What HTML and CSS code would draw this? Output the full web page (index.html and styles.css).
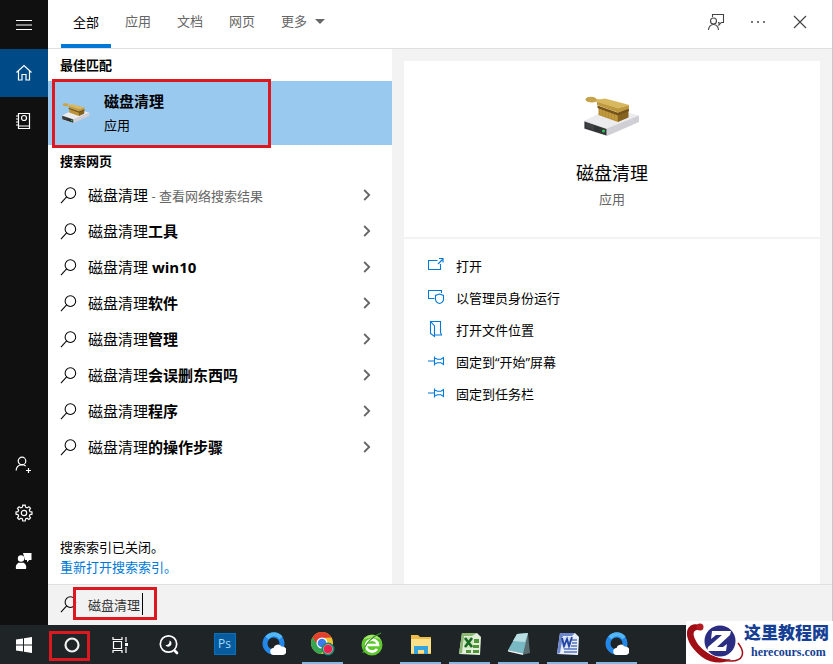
FILE: index.html
```html
<!DOCTYPE html>
<html lang="zh-CN">
<head>
  <meta charset="UTF-8" />
  <meta name="viewport" content="width=device-width, initial-scale=1.0"/>
  <title>搜索</title>
  <link rel="stylesheet" href="styles.css">
</head>
<body>

  <!-- Shared icons -->
  <svg class="sprite" aria-hidden="true">
    <symbol id="search" viewBox="0 0 18 18">
      <g fill="none" stroke="currentColor" stroke-width="1.1"><circle cx="11" cy="6.5" r="5.6"/><path d="M7 10.4 1 17"/></g>
    </symbol>
    <symbol id="chevron" viewBox="0 0 8 12">
      <path d="M1.2 1 6.2 6l-5 5" fill="none" stroke="#666" stroke-width="1.8"/>
    </symbol>
    <symbol id="pin" viewBox="0 0 18 18">
      <path d="M0 8h6.500M6.500 3.500v9M6.500 5l3 1.200H13l2.500-1.700v7L13 9.800H9.500l-3 1.200" fill="none" stroke="currentColor" stroke-width="1.1"/>
    </symbol>
    <symbol id="drive" viewBox="0 0 56 42">
      <path d="M0 26 14 19l24-3 17 4.500L23 34z" fill="#ececef"/>
      <path d="M23 33.500 55 20.500V27L23 41z" fill="#cfcfd5"/>
      <path d="M0 25.500l23 8V41L0 34z" fill="#dcdce0"/>
      <path d="M.5 26.500l22 7.500v6.500l-22-7z" fill="#303234"/>
      <path d="M3 28v5M5 28.500v5M7 29v5M9 30v5" stroke="#4d5052" stroke-width="1"/>
      <circle cx="19.500" cy="36" r="1.500" fill="#2ecb58"/>
      <path d="M14.500 11 34 17.500V27l-19.500-7z" fill="#b58d32"/>
      <path d="M34 17.500 44.500 13v9.500L34 27z" fill="#86621f"/>
      <path d="M17 13v7M20 14v7M23 15v7M26 16v7M29 17v7M32 18v7" stroke="#caa54a" stroke-width="1"/>
      <path d="M13.500 10.500 34 18l11-4v2l-11 4.500L13.500 13z" fill="#73521b"/>
      <path d="M13 5v5l21 7.500 11-4v-3.500L34 13z" fill="#bd983f"/>
      <path d="M10 3c3 1.500 6 1.500 11 .5L45.500 10 34 13.500 13 7C9 8 3 7.500 2 5c-.5-2.500 4-4 8-2z" fill="#d8b85f"/>
      <ellipse cx="7" cy="4.500" rx="5.500" ry="2.800" fill="#c5a34c"/>
    </symbol>
    <symbol id="cloud-q" viewBox="0 0 24 24">
      <circle cx="11.500" cy="11.500" r="8.500" fill="none" stroke="#2387e8" stroke-width="5"/>
      <path d="M5 6a8.500 8.500 0 0 1 14 0" fill="none" stroke="#53b7f7" stroke-width="4"/>
      <path d="M12 23a3.500 3.500 0 0 1-.5-7 4.500 4.500 0 0 1 8-1.500 4 4 0 0 1 1.500 8.500z" fill="#fff"/>
    </symbol>
  </svg>

  <div class="search-window">

    <!-- Left rail -->
    <nav class="rail" aria-label="导航">
      <button aria-label="菜单">
        <svg width="18" height="18"><path d="M1 4.500h16M1 9h16M1 13.500h16" stroke="currentColor" stroke-width="1.200"/></svg>
      </button>
      <button class="current" aria-label="主页">
        <svg width="18" height="18" fill="none" stroke="currentColor" stroke-width="1.200"><path d="M1.500 8.500 9 1.500l7.500 7M3.500 7v9H7v-5.500h4V16h3.500V7"/></svg>
      </button>
      <button aria-label="笔记本">
        <svg width="18" height="18" fill="none" stroke="currentColor" stroke-width="1.200"><path d="M3.500 1.500h11v15h-11zM1 4h3M1 7h3M1 10h3M1 13h3M3.500 14h11"/><circle cx="9" cy="6" r="2.500"/></svg>
      </button>
      <span class="spacer"></span>
      <button aria-label="登录">
        <svg width="18" height="18" fill="none" stroke="currentColor" stroke-width="1.200"><circle cx="7" cy="5" r="3.800"/><path d="M1.200 14.500a5.800 5.800 0 0 1 9.500-4.500M13.500 12v5M11 14.500h5"/></svg>
      </button>
      <button aria-label="设置">
        <svg width="18" height="18" viewBox="0 0 18 18" fill="none" stroke="currentColor" stroke-width="1.200"><circle cx="9" cy="9" r="2.700"/><path d="M7.800 1.200h2.400l.4 2 1.500.7 1.800-1.200 1.600 1.600-1.200 1.800.7 1.500 2 .4v2.200l-2 .4-.7 1.500 1.200 1.800-1.600 1.600-1.800-1.200-1.500.7-.4 2H7.800l-.4-2-1.500-.7-1.800 1.200-1.600-1.600 1.200-1.800-.7-1.500-2-.4V8l2-.4.7-1.500-1.200-1.800 1.600-1.600 1.800 1.200 1.500-.7z"/></svg>
      </button>
      <button aria-label="反馈">
        <svg width="18" height="18" fill="currentColor"><path d="M8 1h8.500v7h-2.200L12 10.300V8H10z"/><circle cx="6" cy="6.500" r="3.200"/><path d="M1 17a5 5.500 0 0 1 2.500-6.200h5.200A5 5.500 0 0 1 11 17z"/></svg>
      </button>
    </nav>

    <div class="panel">
      <header class="topbar">
        <div class="tabs">
          <button class="tab selected">全部</button>
          <button class="tab">应用</button>
          <button class="tab">文档</button>
          <button class="tab">网页</button>
          <button class="tab">更多 <svg width="10" height="5"><path d="M0 0h10L5 5z" fill="#666"/></svg></button>
        </div>
        <div class="window-tools">
          <button aria-label="反馈">
            <svg width="18" height="18" fill="none" stroke="currentColor" stroke-width="1.100"><path d="M5.500 4V1.500h11v8h-2.200L12 12V9.500h-1"/><circle cx="6.500" cy="8" r="3"/><path d="M1.500 17a5 5.500 0 0 1 10 0"/></svg>
          </button>
          <button aria-label="选项">
            <svg width="18" height="18" fill="#777"><path d="M2 8h2v2H2zM8 8h2v2H8zM14 8h2v2h-2z"/></svg>
          </button>
          <button aria-label="关闭">
            <svg width="18" height="18"><path d="m3 3 12 12M15 3 3 15" stroke="currentColor" stroke-width="1.200"/></svg>
          </button>
        </div>
      </header>

      <div class="content">
        <section class="results">
          <h2>最佳匹配</h2>
          <a href="#" class="best marked">
            <svg class="best-icon"><use href="#drive"/></svg>
            <span><strong>磁盘清理</strong><small>应用</small></span>
          </a>
          <h2>搜索网页</h2>
          <ul>
            <li><a href="#"><svg class="glass"><use href="#search"/></svg><span>磁盘清理<small> - 查看网络搜索结果</small></span><svg class="chevron"><use href="#chevron"/></svg></a></li>
            <li><a href="#"><svg class="glass"><use href="#search"/></svg><span>磁盘清理<b>工具</b></span><svg class="chevron"><use href="#chevron"/></svg></a></li>
            <li><a href="#"><svg class="glass"><use href="#search"/></svg><span>磁盘清理 <b>win10</b></span><svg class="chevron"><use href="#chevron"/></svg></a></li>
            <li><a href="#"><svg class="glass"><use href="#search"/></svg><span>磁盘清理<b>软件</b></span><svg class="chevron"><use href="#chevron"/></svg></a></li>
            <li><a href="#"><svg class="glass"><use href="#search"/></svg><span>磁盘清理<b>管理</b></span><svg class="chevron"><use href="#chevron"/></svg></a></li>
            <li><a href="#"><svg class="glass"><use href="#search"/></svg><span>磁盘清理<b>会误删东西吗</b></span><svg class="chevron"><use href="#chevron"/></svg></a></li>
            <li><a href="#"><svg class="glass"><use href="#search"/></svg><span>磁盘清理<b>程序</b></span><svg class="chevron"><use href="#chevron"/></svg></a></li>
            <li><a href="#"><svg class="glass"><use href="#search"/></svg><span>磁盘清理<b>的操作步骤</b></span><svg class="chevron"><use href="#chevron"/></svg></a></li>
          </ul>
          <div class="index-note">
            <p>搜索索引已关闭。</p>
            <a href="#">重新打开搜索索引。</a>
          </div>
        </section>

        <section class="preview">
          <div class="summary">
            <svg class="app-icon"><use href="#drive"/></svg>
            <h1>磁盘清理</h1>
            <p>应用</p>
          </div>
          <div class="actions">
            <button><svg fill="none" stroke="currentColor" stroke-width="1.100"><path d="M9.500 3.500h-9v9h12V7M10 7l4.500-4.500M11 1.500h4v4"/></svg>打开</button>
            <button><svg fill="none" stroke="currentColor" stroke-width="1.100"><path d="M6.500 9.500h-6v-8h13V4M11.500 5l4 1.500v3.500c0 2.500-2 4-4 4.500-2-.5-4-2-4-4.500V6.500z"/></svg>以管理员身份运行</button>
            <button><svg fill="none" stroke="currentColor" stroke-width="1.100"><path d="M2.500.5h10v11l1 2.500H7M2.500.5v12l4 3V5z"/></svg>打开文件位置</button>
            <button><svg><use href="#pin"/></svg>固定到“开始”屏幕</button>
            <button><svg><use href="#pin"/></svg>固定到任务栏</button>
          </div>
        </section>
      </div>

      <form class="search-bar">
        <label for="query" aria-label="搜索"><svg class="glass"><use href="#search"/></svg></label>
        <div class="field marked"><input type="text" id="query" value="磁盘清理"><span class="caret"></span></div>
      </form>
    </div>
  </div>

  <!-- Taskbar -->
  <footer class="taskbar">
    <div class="system">
      <button aria-label="开始">
        <svg width="18" height="18" fill="#fff"><path d="M1 3.500 8 2.500v6H1zM9 2.300 17 1v7.500H9zM1 9.500h7v6l-7-1zM9 9.500h8V17l-8-1.300z"/></svg>
      </button>
      <button class="marked" aria-label="小娜">
        <svg width="18" height="18"><circle cx="9" cy="9" r="6.500" fill="none" stroke="#f0f0f0" stroke-width="2.200"/></svg>
      </button>
      <button aria-label="任务视图">
        <svg width="18" height="18" fill="none" stroke="#fff" stroke-width="1.200"><path d="M2 1v2.500h9V1M2 17v-2.500h9V17M2.500 5.500h8v7h-8zM15 1v5M15 11v6"/><path d="M14 7h3v3h-3z" fill="#fff" stroke="none"/></svg>
      </button>
      <button aria-label="查找">
        <svg width="22" height="22" fill="none" stroke="#fff"><circle cx="10.500" cy="10" r="8.200" stroke-width="1.700"/><path d="M11.500 6.500a3.200 3.200 0 1 1-4 4.500c2.500.5 4.500-1.500 4-4.500z" fill="#fff" stroke="none"/><path d="m17 17 2 2" stroke-width="2.600" stroke-linecap="round"/></svg>
      </button>
    </div>
    <div class="apps">
      <button aria-label="Photoshop"><span class="ps">Ps</span></button>
      <button aria-label="浏览器"><svg><use href="#cloud-q"/></svg></button>
      <button class="open" aria-label="Chrome">
        <svg viewBox="0 0 24 24"><circle cx="11" cy="11" r="11" fill="#f4c331"/><path d="M1.500 5.500A11 11 0 0 1 20.500 5.500L11 6l-4.500 8z" fill="#e2402f"/><path d="M1.500 5.500A11 11 0 0 0 10 22l5-8.500H7z" fill="#35a552"/><circle cx="11" cy="11" r="5.500" fill="#fff"/><circle cx="11" cy="11" r="4.300" fill="#3b7ded"/><circle cx="17" cy="17" r="6.500" fill="#138a6f"/><circle cx="17" cy="17" r="4.600" fill="#e9254f" stroke="#f6b3bd" stroke-width=".6"/></svg>
      </button>
      <button aria-label="绿色浏览器">
        <svg viewBox="0 0 24 24"><circle cx="12" cy="13" r="10.500" fill="#5fc82e"/><path d="M3 8a10.500 10.500 0 0 1 18 0C15 5 9 5 3 8z" fill="#a4e86c"/><path d="M17 17a6 6 0 1 1 1-4H7" fill="none" stroke="#fff" stroke-width="2.600"/><path d="M3 21C5 11 13 4 21 1" fill="none" stroke="#3f9b25" stroke-width="1.300"/></svg>
      </button>
      <button class="open" aria-label="文件资源管理器">
        <svg viewBox="0 0 24 24"><path d="M2 3h7l2 2h11v17H2z" fill="#eebd47"/><path d="M2 7h20v14H2z" fill="#ffe08a"/><path d="M5 22v-8h14v8h-4v-4H9v4z" fill="#37a3dc"/></svg>
      </button>
      <button class="open" aria-label="Excel">
        <svg viewBox="0 0 24 24"><path d="M4 1h15l4 4-1 18-21-1z" fill="#e3efda"/><path d="M4 1h15l-5 3H6L4 21l-3 1z" fill="#8bb873"/><path d="M16 7h5v4h-5zM15 13h6v3h-6zM15 18h6v3h-6zM8 18h5v3H8z" fill="#4f9638"/><path d="M6 5h9v11H6z" fill="#cfe5bf"/><path d="m7 6 7 9M14 6l-7 9" stroke="#176922" stroke-width="2.600"/></svg>
      </button>
      <button class="open" aria-label="记事本">
        <svg viewBox="0 0 24 24"><path d="m10 3 11-1 2 19-8 2z" fill="#596d70"/><path d="M10 2 21 1l-5 21-15-4z" fill="#79b9c3"/><path d="M10 2 21 1l-3 9-12-1z" fill="#b9dfe2"/><path d="m1 18 15 3.500v1.500L1 19.500z" fill="#f0f3ef"/></svg>
      </button>
      <button class="open" aria-label="Word">
        <svg viewBox="0 0 24 24"><path d="M4 1h15l4 4-1 18-21-1z" fill="#e9effa"/><path d="M4 1h15l-3 3H7L4 21l-3 1z" fill="#6d87cd"/><path d="M16 8h5M16 11h5M15 14h6M8 17h13M8 20h13" stroke="#5676bf" stroke-width="1.400"/><path d="M6 5h9v10H6z" fill="#d4dff4"/><path d="m6 6 2 8 3-7 2 7 3-9" fill="none" stroke="#2444a4" stroke-width="1.900"/></svg>
      </button>
      <button class="open" aria-label="浏览器"><svg><use href="#cloud-q"/></svg></button>
    </div>
  </footer>

  <div class="site-badge">
    <svg viewBox="0 0 58 43">
      <circle cx="34" cy="20" r="15.500" fill="#2b2d83"/>
      <path d="M14 9C8 8 6 12 9 18c3 7 9 12 16 16 9 4 17 5 20 4-5 5-20 5-29-2C8 30 0 20 1 11 2 4 8 2 14 4z" fill="#a00f16"/>
      <path d="M52 22c8 10 5 18-7 18-10 0-24-5-32-14" fill="none" stroke="#a00f16" stroke-width="1.500"/>
      <circle cx="14" cy="6" r="3.500" fill="#b11a20"/>
      <path d="M26 10h19l-1 4-13 12h6l4-3-1 7H21l1-4 14-12h-6l-5 4z" fill="#fff"/>
    </svg>
    <div><strong>这里教程网</strong><span>herecours.com</span></div>
  </div>

</body>
</html>
```
FILE: styles.css
```css
:root {
  --blue: #0078d7;
  --pale-blue: #99c9ef;
  --rail: #101010;
  --grey-bg: #f3f3f3;
  --line: #e0e0e0;
  --muted: #666;
  --mark: #dc1821;
}

*,
*::after {
  box-sizing: border-box;
}

body {
  margin: 0;
  min-height: 100vh;
  display: flex;
  flex-direction: column;
  font-family: "Open Sans", "Noto Sans CJK SC", sans-serif;
  font-size: 13px;
  line-height: 20px;
  color: #000;
}

button,
input {
  font: inherit;
  color: inherit;
  border: none;
  background: none;
  padding: 0;
  margin: 0;
}

a {
  color: inherit;
  text-decoration: none;
}

h1,
h2,
p,
ul {
  margin: 0;
  padding: 0;
}

svg {
  display: block;
  flex: none;
}

.sprite {
  position: absolute;
  width: 0;
  height: 0;
}

.search-window {
  flex: 1;
  display: flex;
  border-right: 1px solid #c8c8d0;
}

/* Left rail */
.rail {
  width: 48px;
  display: flex;
  flex-direction: column;
  background: var(--rail);
  color: #fff;
  padding-bottom: 40px;
}

.rail button {
  height: 48px;
  display: grid;
  place-items: center;
}

.rail button:first-child {
  height: 49px;
}

.rail .current {
  background: #004b87;
}

.spacer {
  flex: 1;
}

/* Top bar */
.panel {
  flex: 1;
  display: flex;
  flex-direction: column;
  background: var(--grey-bg);
}

.topbar {
  height: 49px;
  display: flex;
  justify-content: space-between;
  background: #fff;
  border-bottom: 1px solid var(--line);
  padding: 0 11px 0 13px;
}

.tabs,
.window-tools {
  display: flex;
}

.tabs {
  gap: 2px;
}

.tab {
  display: flex;
  align-items: center;
  gap: 8px;
  padding: 0 12px 6px;
  color: var(--muted);
}

.tab.selected {
  color: #000;
  padding-bottom: 0;
  border-bottom: 4px solid var(--blue);
}

.window-tools button {
  width: 42px;
  display: grid;
  place-items: center;
  color: #444;
  padding-bottom: 4px;
}

/* Results */
.content {
  flex: 1;
  display: flex;
}

.results {
  width: 344px;
  display: flex;
  flex-direction: column;
  background: #fff;
}

.results h2 {
  font-size: 13px;
  line-height: 32px;
  padding-left: 12px;
}

.marked {
  position: relative;
}

.marked::after {
  content: "";
  position: absolute;
  border: 3px solid var(--mark);
  pointer-events: none;
}

.best {
  height: 64px;
  display: flex;
  align-items: center;
  gap: 14px;
  padding-left: 14px;
  background: var(--pale-blue);
}

.best.marked::after {
  top: -2px;
  bottom: -3px;
  left: 4px;
  width: 219px;
}

.best-icon {
  width: 28px;
  height: 24px;
}

.best strong,
.best small {
  display: block;
  font-size: 15px;
  line-height: 24px;
}

.best small {
  font-size: 13px;
}

.results ul {
  list-style: none;
}

.results li a {
  height: 36px;
  display: flex;
  align-items: center;
  gap: 11px;
  padding: 0 21px 0 12px;
  font-size: 15px;
}

.results li span {
  flex: 1;
}

.results li small {
  font-size: 13px;
  color: var(--muted);
}

.glass {
  width: 17px;
  height: 17px;
}

.chevron {
  width: 8px;
  height: 12px;
}

.index-note {
  margin-top: auto;
  padding: 0 12px 8px;
}

.index-note a {
  color: var(--blue);
}

/* Preview */
.preview {
  flex: 1;
  display: flex;
  flex-direction: column;
  gap: 2px;
  padding: 12px 12px 0;
}

.summary {
  display: flex;
  flex-direction: column;
  align-items: center;
  background: #fff;
  padding: 34px 0 28px;
}

.app-icon {
  width: 56px;
  height: 42px;
}

.summary h1 {
  font-size: 18px;
  font-weight: normal;
  line-height: 24px;
  margin: 24px 0 4px;
}

.summary p {
  color: var(--muted);
}

.actions {
  flex: 1;
  background: #fff;
  padding: 11px 24px;
}

.actions button {
  height: 32px;
  display: flex;
  align-items: center;
  gap: 10px;
}

.actions svg {
  width: 18px;
  height: 18px;
  color: var(--blue);
}

/* Search box */
.search-bar {
  height: 41px;
  display: flex;
  align-items: center;
  gap: 11px;
  margin-top: -1px;
  padding: 0 0 2px 12px;
  background: #f2f2f2;
  border-top: 1px solid var(--line);
}

.field {
  display: flex;
  align-items: center;
}

.field input {
  width: 54px;
  height: 24px;
  color: #333;
  outline: none;
}

.field.marked::after {
  top: -5px;
  bottom: -4px;
  left: -15px;
  right: -14px;
}

.caret {
  width: 1px;
  height: 22px;
  background: #000;
}

/* Taskbar */
.taskbar {
  height: 39px;
  display: flex;
  gap: 6px;
  background: #1f2427;
}

.system,
.apps {
  display: flex;
}

.system button {
  width: 48px;
  display: grid;
  place-items: center;
}

.system button:last-child {
  width: 50px;
}

.system .marked::after {
  top: 6px;
  bottom: 3px;
  left: 1px;
  right: 6px;
}

.apps button {
  width: 41px;
  margin: 0 4px;
  display: grid;
  place-items: center;
  border-bottom: 2px solid transparent;
}

.apps .open {
  border-color: #86b8e4;
}

.apps svg {
  width: 24px;
  height: 24px;
}

.ps {
  width: 22px;
  height: 22px;
  background: #075b9f;
  border: 1px solid #0871c1;
  color: #a5dcfb;
  font-size: 12px;
}

/* Site badge over the corner */
.site-badge {
  position: absolute;
  right: 0;
  bottom: 0;
  width: 147px;
  height: 43px;
  display: flex;
  background: #fff;
  color: #153f94;
}

.site-badge svg {
  width: 58px;
  height: 43px;
}

.site-badge strong,
.site-badge span {
  display: block;
  font-size: 17px;
  font-weight: 900;
  line-height: 24px;
  white-space: nowrap;
}

.site-badge span {
  font-family: "Liberation Serif", serif;
  font-size: 12px;
  font-weight: bold;
  line-height: 14px;
  padding-left: 7px;
}
```
